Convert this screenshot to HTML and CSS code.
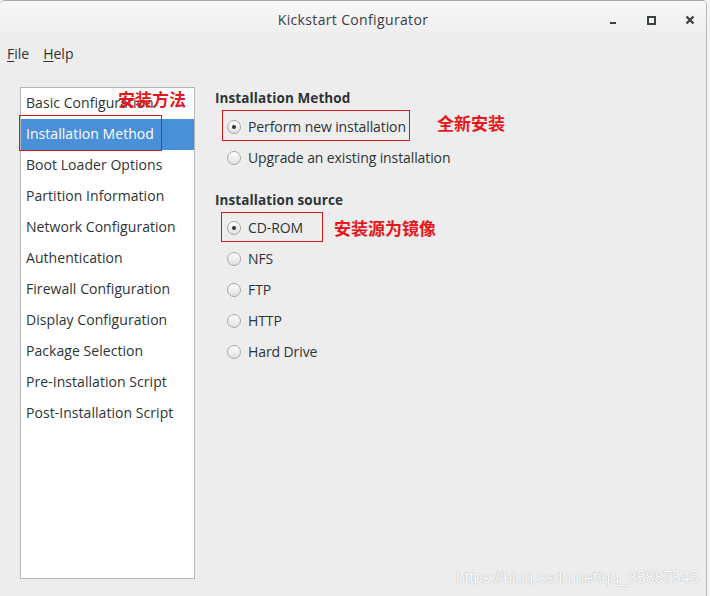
FILE: index.html
```html
<!DOCTYPE html>
<html>
<head>
<meta charset="utf-8">
<link rel="stylesheet" href="styles.css">
</head>
<body>
<div class="window">
  <header class="titlebar">
    <div class="title">Kickstart Configurator</div>
    <div class="controls">
      <span class="ctl ctl-min"></span>
      <span class="ctl ctl-max"></span>
      <svg class="ctl-close" width="10" height="10" viewBox="0 0 10 10"><path d="M1.5 1.5 L8.5 8.5 M8.5 1.5 L1.5 8.5" stroke="#3c4244" stroke-width="2.4" stroke-linecap="butt"/></svg>
    </div>
  </header>
  <nav class="menubar">
    <span class="menu"><u>F</u>ile</span>
    <span class="menu"><u>H</u>elp</span>
  </nav>
  <main class="main">
    <ul class="sidebar">
      <li>Basic Configuration</li>
      <li class="selected">Installation Method</li>
      <li>Boot Loader Options</li>
      <li>Partition Information</li>
      <li>Network Configuration</li>
      <li>Authentication</li>
      <li>Firewall Configuration</li>
      <li>Display Configuration</li>
      <li>Package Selection</li>
      <li>Pre-Installation Script</li>
      <li>Post-Installation Script</li>
    </ul>
    <section class="pane">
      <h3 class="heading">Installation Method</h3>
      <div class="radio"><span class="dot checked"></span>Perform new installation</div>
      <div class="radio"><span class="dot"></span>Upgrade an existing installation</div>
      <h3 class="heading second">Installation source</h3>
      <div class="radio"><span class="dot checked"></span>CD-ROM</div>
      <div class="radio"><span class="dot"></span>NFS</div>
      <div class="radio"><span class="dot"></span>FTP</div>
      <div class="radio"><span class="dot"></span>HTTP</div>
      <div class="radio"><span class="dot"></span>Hard Drive</div>
    </section>
  </main>
  <div class="mark box1"></div>
  <div class="note note1">安装方法</div>
  <div class="mark box2"></div>
  <div class="note note2">全新安装</div>
  <div class="mark box3"></div>
  <div class="note note3">安装源为镜像</div>
  <div class="watermark">https://blog.csdn.net/qq_35887545</div>
</div>
</body>
</html>
```
FILE: styles.css
```css
html, body {
  margin: 0;
  padding: 0;
  background: #f4f4f4;
}
body {
  width: 710px;
  height: 596px;
  overflow: hidden;
  font-family: "Open Sans", "DejaVu Sans", sans-serif;
  color: #2e3436;
}
.window {
  position: relative;
  width: 706px;
  height: 595px;
  background: #ededed;
  border-top: 1px solid #a8a8a8;
  border-right: 1px solid #b8b8b8;
  border-top-left-radius: 5px;
  border-top-right-radius: 5px;
  overflow: hidden;
}
.titlebar {
  height: 37px;
  background: linear-gradient(#f8f8f8, #ededed);
  display: flex;
  align-items: center;
  justify-content: center;
  position: relative;
}
.title {
  font-size: 14px;
  color: #3a4042;
  letter-spacing: 0.35px;
  margin-top: 0;
}
.controls {
  position: absolute;
  right: 0;
  top: 0;
  height: 37px;
  display: flex;
  align-items: center;
}
.ctl-min {
  display: block;
  width: 6px;
  height: 2px;
  background: #3c4244;
  margin-top: 6px;
  margin-right: 31px;
}
.ctl-max {
  display: block;
  width: 5px;
  height: 5px;
  border: 2px solid #3c4244;
  margin-right: 29px;
  margin-top: 1px;
}
.ctl-close {
  display: block;
  margin-right: 11px;
  margin-top: 1px;
}
.menubar {
  height: 31px;
  display: flex;
  align-items: center;
  padding-left: 7px;
  gap: 14px;
  font-size: 14px;
}
.menu u {
  text-decoration-thickness: 1px;
  text-underline-offset: 2px;
}
.main {
  display: flex;
  align-items: flex-start;
}
.sidebar {
  list-style: none;
  margin: 18px 0 0 20px;
  padding: 0;
  width: 173px;
  height: 490px;
  background: #fff;
  border: 1px solid #b6b6b6;
}
.sidebar li {
  height: 31px;
  line-height: 30px;
  padding-left: 5px;
  font-size: 14px;
  letter-spacing: 0.05px;
  white-space: nowrap;
  color: #2e3436;
}
.sidebar li.selected {
  background: #4a90d9;
  color: #fff;
}
.pane {
  margin-left: 20px;
  padding-top: 19px;
  font-size: 14px;
  letter-spacing: -0.1px;
}
.heading {
  margin: 0 0 3px 0;
  height: 20px;
  line-height: 20px;
  font-size: 13.5px;
  font-weight: bold;
  letter-spacing: 0.1px;
  color: #2e3436;
}
.heading.second {
  margin-top: 17px;
  margin-bottom: 2px;
}
.radio {
  height: 31px;
  display: flex;
  align-items: center;
  padding-left: 12px;
  white-space: nowrap;
}
.dot {
  width: 12px;
  height: 12px;
  border-radius: 50%;
  border: 1px solid #a7a9a9;
  background: linear-gradient(#fdfdfd, #e0e0e0);
  margin-right: 7px;
  position: relative;
  box-sizing: content-box;
}
.dot.checked::after {
  content: "";
  position: absolute;
  left: 4px;
  top: 4px;
  width: 4px;
  height: 4px;
  border-radius: 50%;
  background: #2e3436;
}
.mark {
  position: absolute;
  border: 1px solid #d01a1a;
}
.box1 { left: 19px; top: 114px; width: 141px; height: 34px; }
.box2 { left: 222px; top: 109px; width: 186px; height: 29px; }
.box3 { left: 221px; top: 211px; width: 100px; height: 28px; }
.note {
  position: absolute;
  font-family: "Noto Sans CJK SC", sans-serif;
  font-weight: bold;
  font-size: 17px;
  line-height: 20px;
  color: #e8161b;
}
.note1 { left: 118px; top: 88px; }
.note2 { left: 437px; top: 112px; }
.note3 { left: 334px; top: 217px; }
.watermark {
  position: absolute;
  left: 456px;
  top: 568px;
  font-family: "Liberation Sans", Arial, sans-serif;
  font-size: 16px;
  letter-spacing: -0.1px;
  color: #fbfbfb;
  text-shadow: 0 0 1px #b0b0b0, 0 0 1px #c0c0c0;
}
```
